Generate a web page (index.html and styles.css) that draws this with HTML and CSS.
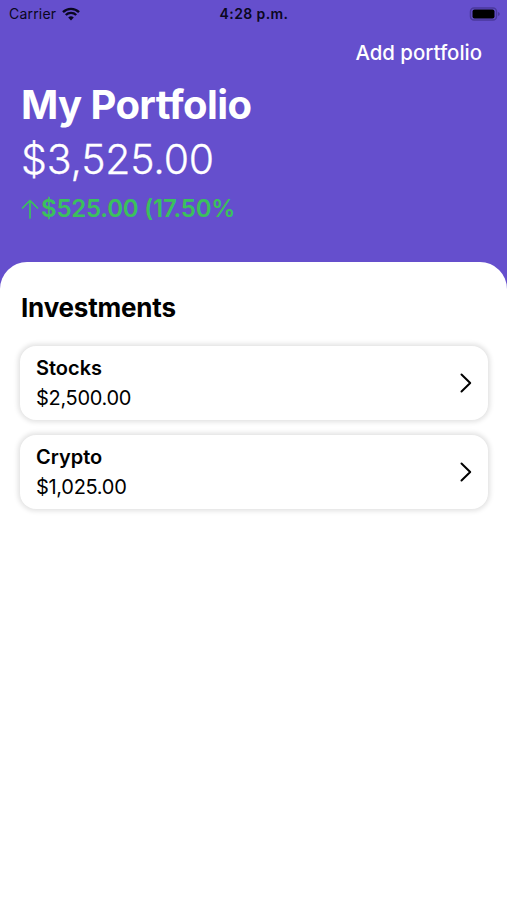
FILE: index.html
```html
<!DOCTYPE html>
<html lang="en">

<head>
	<title>My Portfolio</title>
	<meta charset="UTF-8">
	<meta name="viewport" content="width=device-width, initial-scale=1">
	<link rel="stylesheet" href="styles.css">
</head>

<body>
	<header class="header">
		<div class="status">
			<div class="carrier">
				<span>Carrier</span>
				<svg class="wifi" viewBox="0 0 18 14" width="18" height="14">
					<path d="M1 5.2a11.4 11.4 0 0 1 16 0M3.8 8a7.4 7.4 0 0 1 10.4 0" />
					<path class="dot" d="M9 13.4L6.2 10.6a4 4 0 0 1 5.6 0z" />
				</svg>
			</div>
			<div class="time">4:28 p.m.</div>
			<div class="power">
				<svg class="battery" viewBox="0 0 32 14" width="32" height="14">
					<rect class="shell" x="1.500" y="1" width="26" height="12" rx="3.5" />
					<rect x="3.500" y="2.500" width="22" height="9" rx="2" />
					<path class="tip" d="M29 5v4q1.8-.6 1.8-2T29 5z" />
				</svg>
			</div>
		</div>
		<div class="toolbar">
			<a class="add">Add portfolio</a>
		</div>
		<h1 class="title">My Portfolio</h1>
		<div class="total">$3,525.00</div>
		<div class="gain">
			<svg class="arrow" viewBox="0 0 18 20" width="18" height="20">
				<path d="M9 19V1.5M1.5 9L9 1.5L16.500 9" />
			</svg>
			<span>$525.00 (17.50%</span>
		</div>
	</header>

	<main class="panel">
		<h2 class="heading">Investments</h2>
		<div class="list">
			<div class="card">
				<div>
					<div class="name">Stocks</div>
					<div class="value">$2,500.00</div>
				</div>
				<svg class="chevron" viewBox="0 0 12 20" width="12" height="20">
					<path d="M1.500 1.500L10.200 10L1.500 18.500" />
				</svg>
			</div>
			<div class="card">
				<div>
					<div class="name">Crypto</div>
					<div class="value">$1,025.00</div>
				</div>
				<svg class="chevron" viewBox="0 0 12 20" width="12" height="20">
					<path d="M1.500 1.500L10.200 10L1.500 18.500" />
				</svg>
			</div>
		</div>
	</main>
</body>

</html>
```

FILE: styles.css
```css
* {
	box-sizing: border-box;
}

body {
	margin: 0;
	min-height: 900px;
	display: flex;
	flex-direction: column;
	background: #654fcd;
	font-family: Inter, "Liberation Sans", sans-serif;
	color: #000;
}

.header {
	height: 262px;
	color: #fff;
}

.status {
	display: flex;
	align-items: center;
	height: 27px;
	padding: 0 6px 0 9px;
	font-size: 14px;
	color: #0a0720;
}

.carrier,
.power {
	display: flex;
	align-items: center;
	flex: 1;
}

.carrier {
	gap: 6px;
	letter-spacing: 0.2px;
}

.power {
	justify-content: flex-end;
}

.time {
	margin-right: 2px;
	font-weight: 600;
	letter-spacing: 0.4px;
}

.wifi path {
	fill: none;
	stroke: #0a0720;
	stroke-width: 2.4;
}

.wifi .dot {
	fill: #0a0720;
	stroke: none;
}

.battery .shell {
	fill: none;
	stroke: #4a399c;
	stroke-width: 1.5;
}

.battery .tip {
	fill: #4a399c;
}

.toolbar {
	display: flex;
	justify-content: flex-end;
	padding-right: 25px;
	line-height: 52px;
}

.add {
	font-size: 20.4px;
	font-weight: 500;
}

.title,
.total,
.gain {
	margin: 0;
	padding-left: 21px;
}

.title {
	font-size: 40px;
	font-weight: 700;
	line-height: 52px;
	letter-spacing: -0.6px;
}

.total {
	font-size: 41px;
	font-weight: 300;
	line-height: 57px;
	letter-spacing: -0.2px;
	-webkit-text-stroke: 0.3px #fff;
}

.gain {
	display: flex;
	align-items: center;
	gap: 2px;
	font-size: 24px;
	font-weight: 600;
	line-height: 41px;
	letter-spacing: -0.2px;
	color: #3ac15c;
}

.arrow path,
.chevron path {
	fill: none;
	stroke: #3ac15c;
	stroke-width: 1.7;
	stroke-linecap: round;
	stroke-linejoin: round;
}

.panel {
	flex: 1;
	padding: 29px 19px 0 20px;
	background: #fff;
	border-radius: 27px 27px 0 0;
}

.heading {
	margin: 0 0 21px 1px;
	font-size: 26px;
	font-weight: 700;
	line-height: 34px;
	letter-spacing: -0.2px;
}

.list {
	display: flex;
	flex-direction: column;
	gap: 15px;
}

.card {
	display: flex;
	align-items: center;
	justify-content: space-between;
	height: 74px;
	padding: 0 16px;
	background: #fff;
	border-radius: 16px;
	box-shadow: 0 0 5px 2px rgba(0, 0, 0, 0.12);
	font-size: 20px;
	line-height: 29px;
}

.name {
	padding-top: 1px;
	font-weight: 600;
}

.value {
	padding-top: 1px;
	letter-spacing: -0.3px;
}

.chevron path {
	stroke: #000;
	stroke-width: 2;
}
```
